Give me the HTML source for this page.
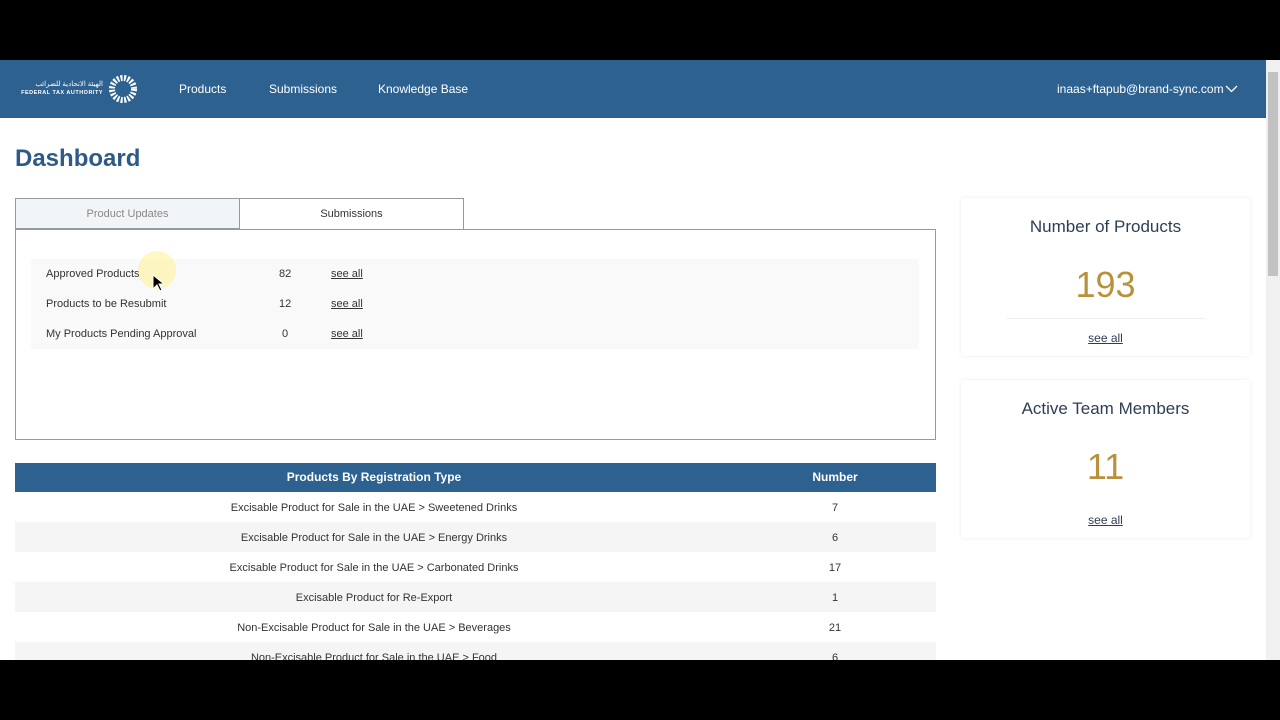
<!DOCTYPE html>
<html><head><style>
*{margin:0;padding:0;box-sizing:border-box}
body{width:1280px;height:720px;background:#000;font-family:"Liberation Sans",sans-serif;position:relative;overflow:hidden}
.page{position:absolute;top:60px;left:0;width:1280px;height:600px;background:#fff;overflow:hidden}
.hdr{position:absolute;top:0;left:0;width:1266px;height:58px;background:#2d6190;color:#fff;font-size:12px}
.hdr span{position:absolute;top:22px}
.sb{position:absolute;right:0;top:0;width:14px;height:600px;background:#f0f0f0}
.sb div{position:absolute;left:2px;top:12px;width:10px;height:204px;background:#c2c2c2}
h1{position:absolute;left:15px;top:85px;font-size:24px;color:#2d5a86;font-weight:bold}
.tab{position:absolute;top:138px;height:31px;border:1px solid #999;font-size:11px;text-align:center;line-height:30px}
.panel{position:absolute;left:15px;top:169px;width:921px;height:211px;border:1px solid #999}
.row{position:absolute;left:31px;width:888px;height:30px;font-size:11px;color:#333;line-height:30px}
.row span{position:absolute}
.row a{position:absolute;left:300px;color:#333;text-decoration:underline}
.th{position:absolute;left:15px;top:403px;width:921px;height:29px;background:#2d6190;color:#fff;font-weight:bold;font-size:12px;line-height:29px}
.tr{position:absolute;left:15px;width:921px;height:30px;font-size:11px;color:#333;line-height:30px}
.card{position:absolute;left:961px;width:289px;height:158px;background:#fff;box-shadow:0 0 4px rgba(0,0,0,.08);text-align:center}
.card .t{margin-top:19px;font-size:17px;color:#2d3e55}
.card .n{margin-top:27px;font-size:36px;color:#b8913a}
.card hr{border:0;border-top:1px solid #eee;width:198px;margin:12px auto 10px}
.card a{font-size:12px;color:#2d3e55;text-decoration:underline}
</style></head><body>
<div class="page">
<div class="hdr">
<svg style="position:absolute;left:108px;top:14px" width="30" height="30" viewBox="0 0 30 30"><circle cx="15" cy="15" r="11" fill="none" stroke="#fff" stroke-width="6" stroke-dasharray="2 1.5"/><circle cx="15" cy="15" r="6" fill="#2d6190"/></svg>
<div style="position:absolute;left:15px;top:21px;font-size:7px;line-height:8px;color:#fff;text-align:right;width:88px">الهيئة الاتحادية للضرائب<br><b style="font-size:5.5px;letter-spacing:.5px">FEDERAL TAX AUTHORITY</b></div>
<span style="left:179px">Products</span><span style="left:269px">Submissions</span><span style="left:378px">Knowledge Base</span>
<span style="left:1057px">inaas+ftapub@brand-sync.com</span>
<svg style="position:absolute;left:1225px;top:25px" width="13" height="8"><path d="M1 1l5.5 5.5L12 1" fill="none" stroke="#fff" stroke-width="1.3"/></svg>
</div>
<div class="sb"><div></div></div>
<h1>Dashboard</h1>
<div class="tab" style="left:15px;width:225px;background:#f2f5f8;color:#888">Product Updates</div>
<div class="tab" style="left:239px;width:225px;background:#fff;color:#333;border-bottom-color:#fff;height:32px">Submissions</div>
<div class="panel"></div>
<div class="row" style="top:199px;background:#f9f9f9"><span style="left:15px">Approved Products</span><span style="left:248px">82</span><a>see all</a></div>
<div class="row" style="top:229px;background:#f9f9f9"><span style="left:15px">Products to be Resubmit</span><span style="left:248px">12</span><a>see all</a></div>
<div class="row" style="top:259px;background:#f9f9f9"><span style="left:15px">My Products Pending Approval</span><span style="left:251px">0</span><a>see all</a></div>
<div style="position:absolute;left:138px;top:191px;width:38px;height:38px;border-radius:50%;background:rgba(255,240,120,.45)"></div>
<svg style="position:absolute;left:152px;top:214px" width="12" height="18"><path d="M1 1v14l4-4 3 6 2-1-3-6h5z" fill="#000" stroke="#fff"/></svg>
<div class="th"><span style="position:absolute;left:0;width:718px;text-align:center">Products By Registration Type</span><span style="position:absolute;left:770px;width:100px;text-align:center">Number</span></div>
<div class="tr" style="top:432px"><span style="position:absolute;width:718px;text-align:center;top:1px">Excisable Product for Sale in the UAE &gt; Sweetened Drinks</span><span style="position:absolute;left:770px;width:100px;text-align:center;top:1px">7</span></div>
<div class="tr" style="top:462px;background:#f5f5f5"><span style="position:absolute;width:718px;text-align:center;top:1px">Excisable Product for Sale in the UAE &gt; Energy Drinks</span><span style="position:absolute;left:770px;width:100px;text-align:center;top:1px">6</span></div>
<div class="tr" style="top:492px"><span style="position:absolute;width:718px;text-align:center;top:1px">Excisable Product for Sale in the UAE &gt; Carbonated Drinks</span><span style="position:absolute;left:770px;width:100px;text-align:center;top:1px">17</span></div>
<div class="tr" style="top:522px;background:#f5f5f5"><span style="position:absolute;width:718px;text-align:center;top:1px">Excisable Product for Re-Export</span><span style="position:absolute;left:770px;width:100px;text-align:center;top:1px">1</span></div>
<div class="tr" style="top:552px"><span style="position:absolute;width:718px;text-align:center;top:1px">Non-Excisable Product for Sale in the UAE &gt; Beverages</span><span style="position:absolute;left:770px;width:100px;text-align:center;top:1px">21</span></div>
<div class="tr" style="top:582px;background:#f5f5f5"><span style="position:absolute;width:718px;text-align:center;top:1px">Non-Excisable Product for Sale in the UAE &gt; Food</span><span style="position:absolute;left:770px;width:100px;text-align:center;top:1px">6</span></div>
<div class="card" style="top:138px"><div class="t">Number of Products</div><div class="n">193</div><hr><a>see all</a></div>
<div class="card" style="top:320px"><div class="t">Active Team Members</div><div class="n">11</div><hr style="visibility:hidden"><a>see all</a></div>
</div>
</body></html>
